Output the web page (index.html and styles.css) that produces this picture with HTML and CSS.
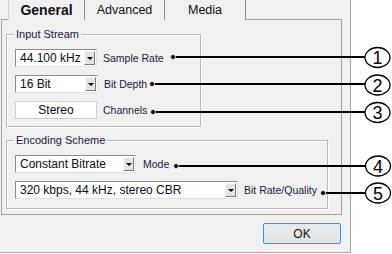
FILE: index.html
```html
<!DOCTYPE html>
<html lang="en">
<head>
    <meta charset="UTF-8">
    <title>Encoder Settings</title>
    <link rel="stylesheet" href="styles.css">
</head>
<body>
    <div class="dialog">
        <div class="tabs">
            <div class="tab active">General</div>
            <div class="tab">Advanced</div>
            <div class="tab">Media</div>
        </div>

        <div class="panel">
            <div class="group group-input">
                <div class="group-title">Input Stream</div>
                <div class="rows">
                    <div class="row">
                        <div class="combo w-rate"><span class="value">44.100 kHz</span><span class="drop"></span></div>
                        <span class="label">Sample Rate</span>
                    </div>
                    <div class="row">
                        <div class="combo w-depth"><span class="value">16 Bit</span><span class="drop"></span></div>
                        <span class="label">Bit Depth</span>
                    </div>
                    <div class="row">
                        <div class="readonly">Stereo</div>
                        <span class="label">Channels</span>
                    </div>
                </div>
            </div>

            <div class="group group-enc">
                <div class="group-title">Encoding Scheme</div>
                <div class="rows">
                    <div class="row">
                        <div class="combo w-mode"><span class="value">Constant Bitrate</span><span class="drop"></span></div>
                        <span class="label">Mode</span>
                    </div>
                    <div class="row">
                        <div class="combo w-quality"><span class="value">320 kbps, 44 kHz, stereo CBR</span><span class="drop"></span></div>
                        <span class="label">Bit Rate/Quality</span>
                    </div>
                </div>
            </div>
        </div>

        <div class="buttons">
            <button class="ok">OK</button>
        </div>
    </div>

    <!-- callout annotations drawn over the dialog -->
    <svg class="callouts" width="392" height="254" viewBox="0 0 392 254">
        <g stroke="#000" stroke-width="2">
            <line x1="173" y1="57" x2="365" y2="57"/>
            <line x1="152" y1="84" x2="365" y2="84"/>
            <line x1="153" y1="112" x2="365" y2="112"/>
            <line x1="176" y1="166" x2="365" y2="166"/>
            <line x1="323" y1="193" x2="365" y2="193"/>
        </g>
        <g fill="#000" stroke="#fff" stroke-width="0.8">
            <circle cx="173" cy="57" r="2.5"/>
            <circle cx="152" cy="84" r="2.5"/>
            <circle cx="153" cy="112" r="2.5"/>
            <circle cx="176" cy="166" r="2.5"/>
            <circle cx="323" cy="193" r="2.5"/>
        </g>
        <g fill="#fff" stroke="#000" stroke-width="1.3">
            <ellipse cx="377.5" cy="57.5" rx="12.5" ry="10"/>
            <ellipse cx="377.5" cy="85" rx="12.5" ry="10"/>
            <ellipse cx="377.5" cy="112.5" rx="12.5" ry="10"/>
            <ellipse cx="378" cy="166" rx="12.5" ry="10"/>
            <ellipse cx="378" cy="193" rx="12.5" ry="10"/>
        </g>
        <g class="num" text-anchor="middle">
            <text x="377.5" y="64">1</text>
            <text x="377.5" y="91.5">2</text>
            <text x="377.5" y="119">3</text>
            <text x="378" y="172.5">4</text>
            <text x="378" y="199.5">5</text>
        </g>
    </svg>
</body>
</html>
```

FILE: styles.css
```css
body {
    margin: 0;
    background: #fff;
    font-family: "Liberation Sans", Arial, sans-serif;
    font-size: 11px;
    color: #1b1b3c;
    position: relative;
    width: 392px;
    height: 254px;
    overflow: hidden;
}

.dialog {
    width: 350px;
    height: 252px;
    background: #f0f0f0;
    border-right: 1px solid #a9a9a9;
    border-bottom: 1px solid #a9a9a9;
    display: flex;
    flex-direction: column;
}

/* tab strip */
.tabs {
    display: flex;
    height: 20px;
    padding-left: 8px;
    margin-bottom: -1px;
    position: relative;
    z-index: 1;
}

.tab {
    height: 20px;
    line-height: 20px;
    text-align: center;
    font-size: 12.5px;
    color: #111;
    background: #f0f0f0;
    border-right: 1px solid #8e8e8e;
    box-sizing: border-box;
}

.tab:nth-child(1) { width: 77px; }
.tab:nth-child(2) { width: 80px; }
.tab:nth-child(3) { width: 81px; }

.tab.active {
    font-size: 14px;
    font-weight: bold;
    border-left: 1px solid #d2d2d2;
}

.panel {
    width: 341px;
    height: 196px;
    margin-left: 1px;
    box-sizing: border-box;
    border: 1px solid #a3a3a3;
    padding: 14px 0 0 4px;
}

/* group boxes */
.group {
    border: 1px solid #b8b8b8;
    box-shadow: inset 1px 1px #fff, 1px 1px #fff;
    padding: 0 8px 7px;
    box-sizing: border-box;
}

.group-input { width: 195px; }

.group-enc {
    width: 322px;
    margin-top: 13px;
    padding-bottom: 9px;
}

.group-title {
    display: table;
    margin: -7px 0 0 -1px;
    padding: 0 2px;
    line-height: 13px;
    background: #f0f0f0;
}

.rows {
    display: flex;
    flex-direction: column;
    gap: 8px;
    margin-top: 8px;
}

.row {
    display: flex;
    align-items: center;
    gap: 6px;
}

/* combo boxes */
.combo {
    display: flex;
    align-items: center;
    height: 18px;
    box-sizing: border-box;
    background: #fff;
    border: 1px solid;
    border-color: #8d8d8d #e2e2e2 #e2e2e2 #8d8d8d;
    padding-left: 4px;
    font-size: 12px;
    color: #0c0c20;
}

.combo .value {
    flex: 1;
    white-space: nowrap;
    overflow: hidden;
}

.w-rate { width: 82px; }
.w-depth { width: 83px; }
.w-mode { width: 121px; margin-right: 1px; }
.w-quality { width: 223px; }

.drop {
    width: 11px;
    height: 14px;
    margin-right: 1px;
    box-sizing: border-box;
    border: 1px solid;
    border-color: #f8f8f8 #7a7a7a #7a7a7a #f8f8f8;
    background: #e4e4e4;
    position: relative;
}

.drop::after {
    content: "";
    position: absolute;
    left: 2px;
    top: 5px;
    border-left: 3px solid transparent;
    border-right: 3px solid transparent;
    border-top: 3px solid #000;
}

.readonly {
    width: 82px;
    height: 18px;
    line-height: 16px;
    box-sizing: border-box;
    border: 1px solid #cfcfcf;
    background: #fff;
    text-align: center;
    font-size: 12px;
    color: #0c0c20;
}

.label {
    font-size: 10.5px;
    white-space: nowrap;
}

/* bottom buttons */
.buttons {
    display: flex;
    justify-content: flex-end;
    padding: 8px 9px 0 0;
}

.ok {
    width: 78px;
    height: 21px;
    font-family: "Liberation Sans", Arial, sans-serif;
    font-size: 12px;
    color: #111;
    background: linear-gradient(#ececec, #e3e3e3);
    border: 1px solid #3d8fd6;
    box-shadow: inset 0 0 0 1px #d8ecfa;
    border-radius: 2px;
    padding: 0;
}

/* annotation overlay */
.callouts {
    position: absolute;
    top: 0;
    left: 0;
    pointer-events: none;
}

.callouts .num {
    font-family: "Liberation Sans", Arial, sans-serif;
    font-size: 18px;
    fill: #000;
}
```
